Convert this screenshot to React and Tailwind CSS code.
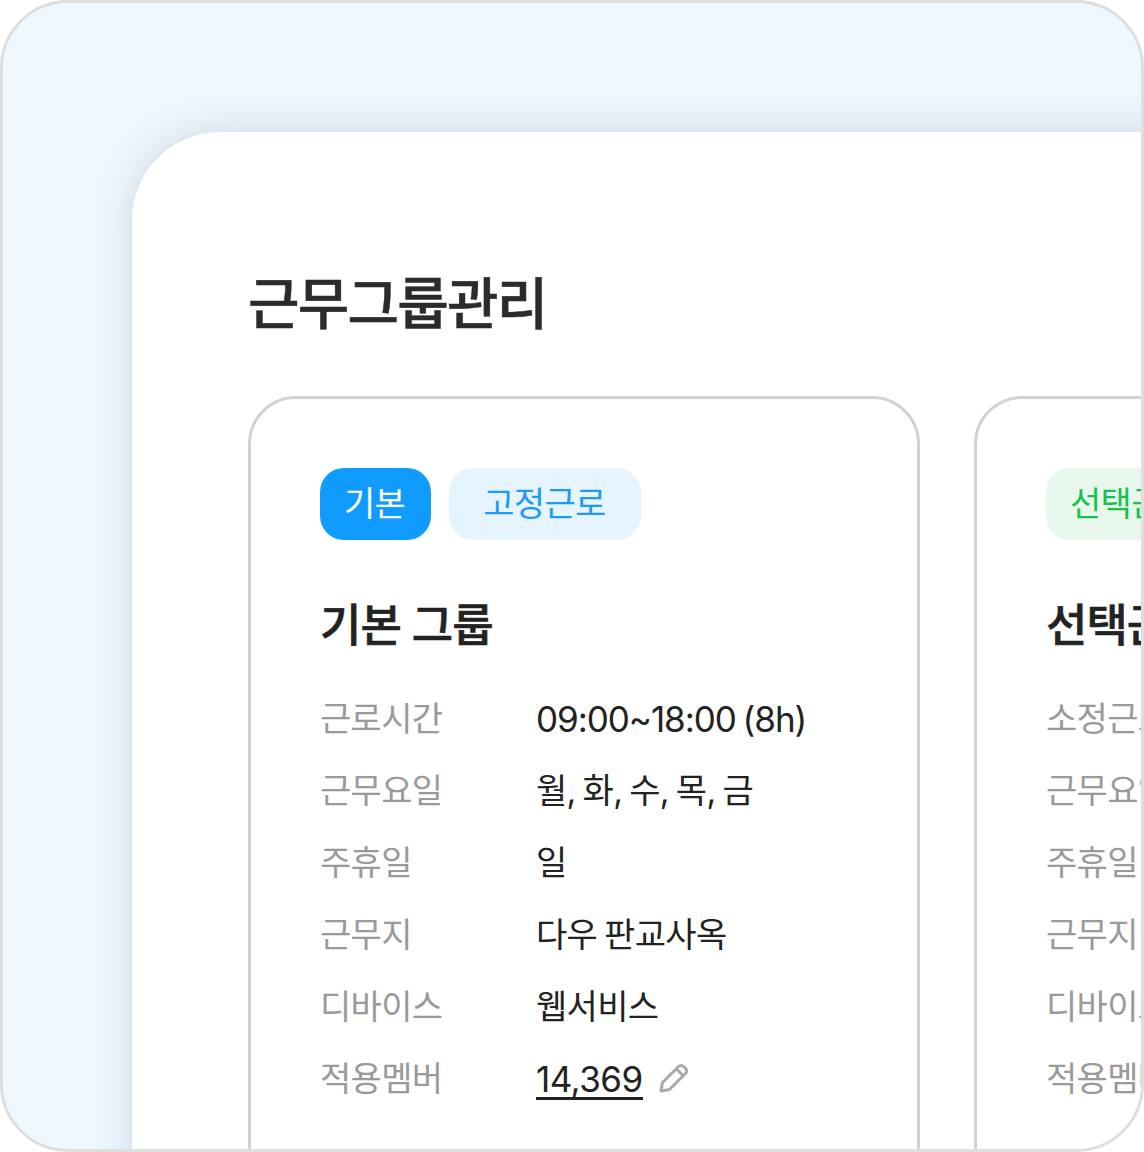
const FONT = "font-['Inter','Noto_Sans_CJK_KR',sans-serif]";

const GROUPS = [
  {
    tags: [
      { label: "기본", className: "pl-[24px] pr-[26px] bg-[#0f9bff] text-white" },
      { label: "고정근로", className: "pl-[34px] pr-[35px] bg-[#e6f4ff] text-[#1f9bf5]" },
    ],
    name: "기본 그룹",
    rows: [
      ["근로시간", "09:00~18:00 (8h)"],
      ["근무요일", "월, 화, 수, 목, 금"],
      ["주휴일", "일"],
      ["근무지", "다우 판교사옥"],
      ["디바이스", "웹서비스"],
      ["적용멤버", "14,369"],
    ],
  },
  {
    tags: [{ label: "선택근로", className: "pl-[24px] pr-[26px] bg-[#e8f8ec] text-[#19c24f]" }],
    name: "선택근로 그룹",
    rows: [
      ["소정근로시간", "40시간"],
      ["근무요일", "월, 화, 수, 목, 금"],
      ["주휴일", "일"],
      ["근무지", "다우 판교사옥"],
      ["디바이스", "웹서비스"],
      ["적용멤버", "1,204"],
    ],
  },
];

function EditIcon() {
  return (
    <svg width="32" height="32" viewBox="0 0 32 32" fill="none" stroke="#aaaaaa" strokeWidth="3" strokeLinejoin="round">
      <path d="M20.5 4.5a3.6 3.6 0 0 1 5.1 0l1.9 1.9a3.6 3.6 0 0 1 0 5.1L11.5 27.5 3 29l1.5-8.5z" />
      <path d="M18.5 7l6.5 6.5" />
    </svg>
  );
}

function GroupCard({ group }) {
  return (
    <div className="w-[672px] h-[900px] shrink-0 border-[3px] border-[#d2d2d2] rounded-[48px] pt-[69px] pl-[69px]">
      <div className="flex gap-[18px]">
        {group.tags.map((tag) => (
          <span
            key={tag.label}
            className={`flex items-center h-[72px] pb-[2px] rounded-[24px] text-[34px] tracking-[-0.02em] whitespace-nowrap ${tag.className}`}
          >
            {tag.label}
          </span>
        ))}
      </div>
      <h2 className="mt-[55px] h-[62px] text-[45px] leading-[62px] font-medium [-webkit-text-stroke:0.6px_#222222] text-[#222222] tracking-[-0.022em] whitespace-nowrap">
        {group.name}
      </h2>
      <div className="mt-[25px] flex flex-col">
        {group.rows.map(([label, value]) => (
          <div key={label} className="flex h-[72px] items-center text-[34px] tracking-[-0.02em] [word-spacing:-2px] whitespace-nowrap">
            <span className="w-[216px] shrink-0 text-[#9a9a9a]">{label}</span>
            {label === "적용멤버" ? (
              <span className="flex items-center gap-[15px] text-[#222222]">
                <span className="border-b-[3px] border-[#222222] pt-[4px] leading-[36px] text-[35px] tracking-[-0.015em]">{value}</span>
                <EditIcon />
              </span>
            ) : label === "근로시간" ? (
              <span className="pt-[2px] text-[#222222] text-[35px] tracking-[-0.03em]">{value}</span>
            ) : (
              <span className="text-[#222222]">{value}</span>
            )}
          </div>
        ))}
      </div>
    </div>
  );
}

export default function App() {
  return (
    <div className={`w-[1144px] h-[1152px] bg-white ${FONT}`}>
      <div className="w-full h-full overflow-hidden border-[3px] border-[#dedede] rounded-[68px] bg-[#eff8ff] pt-[129px] pl-[129px]">
        <div className="w-[1100px] h-[1100px] bg-white rounded-tl-[88px] shadow-[0_0_40px_rgba(60,80,90,0.2)] pt-[132px] pl-[116px]">
          <h1 className="h-[80px] text-[56px] leading-[80px] font-medium [-webkit-text-stroke:0.5px_#2b2b2b] text-[#2b2b2b] tracking-[-0.032em] whitespace-nowrap">
            근무그룹관리
          </h1>
          <div className="mt-[52px] flex gap-[54px]">
            {GROUPS.map((group) => (
              <GroupCard key={group.name} group={group} />
            ))}
          </div>
        </div>
      </div>
    </div>
  );
}
